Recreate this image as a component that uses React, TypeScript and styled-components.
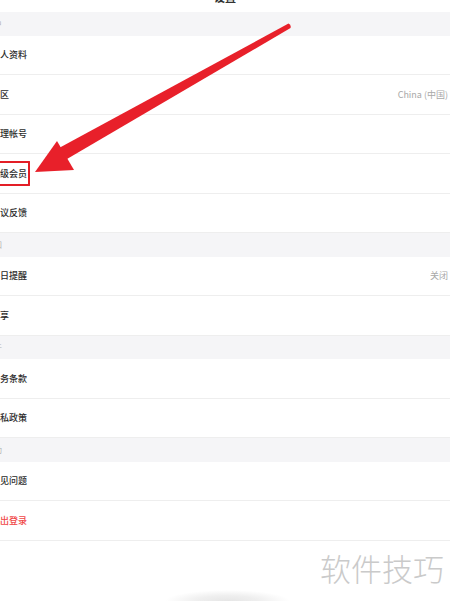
import React from "react";
import styled, { createGlobalStyle } from "styled-components";

const Global = createGlobalStyle`
  html, body { margin: 0; padding: 0; background: #ffffff; }
  body { font-family: "Noto Sans CJK SC", "Noto Sans", sans-serif; overflow: hidden; }
`;

const Page = styled.div`
  position: relative;
  width: 450px;
  height: 601px;
  overflow: hidden;
  background: #ffffff;
`;

const NavBar = styled.div`
  height: 12px;
  display: flex;
  align-items: flex-start;
  justify-content: center;
  overflow: hidden;
`;

const Title = styled.span`
  margin-top: -8px;
  font-size: 11px;
  line-height: 11px;
  font-weight: 700;
  color: #333;
`;

const SectionHeader = styled.div`
  height: 23.5px;
  background: #f5f5f7;
  display: flex;
  align-items: center;
  font-size: 8px;
  color: #b0b0b0;
  overflow: hidden;
`;

const HeaderText = styled.span`
  margin-left: -14px;
`;

const Row = styled.div`
  height: 38.5px;
  border-bottom: 1px solid #eeeeee;
  display: flex;
  align-items: center;
  justify-content: space-between;
  padding-right: 2px;
`;

const Label = styled.span<{ $danger?: boolean }>`
  position: relative;
  margin-left: -9px;
  font-size: 9px;
  font-weight: 500;
  color: ${(p) => (p.$danger ? "#f04848" : "#2c2c2c")};
`;

const Value = styled.span`
  font-size: 9px;
  color: #a8a8a8;
`;

const Highlight = styled.span`
  position: absolute;
  left: 7px;
  right: -3px;
  top: -6px;
  bottom: -6px;
  border: 2px solid #e31e26;
  border-left: none;
  border-radius: 1px;
`;

const ArrowLayer = styled.svg`
  position: absolute;
  left: 0;
  top: 0;
  pointer-events: none;
`;

const Watermark = styled.div`
  position: absolute;
  left: 315px;
  top: 542px;
  width: 135px;
  height: 50px;
  background: #ffffff;
  display: flex;
  align-items: center;
  padding-left: 5px;
  box-sizing: border-box;
  font-size: 31px;
  font-weight: 300;
  color: #cacaca;
`;

const HomeGlow = styled.div`
  position: absolute;
  left: 165px;
  top: 590px;
  width: 125px;
  height: 22px;
  border-radius: 50%;
  background: radial-gradient(ellipse at center, #e6e6e6 0%, #efefef 35%, rgba(255,255,255,0) 70%);
`;

type Item = { label: string; value?: string; danger?: boolean; mark?: boolean };

const sections: { title: string; items: Item[] }[] = [
  {
    title: "账户",
    items: [
      { label: "个人资料" },
      { label: "地区", value: "China (中国)" },
      { label: "管理帐号" },
      { label: "升级会员", mark: true },
      { label: "建议反馈" },
    ],
  },
  { title: "通知", items: [{ label: "每日提醒", value: "关闭" }, { label: "分享" }] },
  { title: "关于", items: [{ label: "服务条款" }, { label: "隐私政策" }] },
  { title: "帮助", items: [{ label: "常见问题" }, { label: "退出登录", danger: true }] },
];

export default function App() {
  return (
    <Page>
      <Global />
      <NavBar>
        <Title>设置</Title>
      </NavBar>
      {sections.map((s) => (
        <React.Fragment key={s.title}>
          <SectionHeader>
            <HeaderText>{s.title}</HeaderText>
          </SectionHeader>
          {s.items.map((it) => (
            <Row key={it.label}>
              <Label $danger={it.danger}>
                {it.label}
                {it.mark && <Highlight />}
              </Label>
              {it.value && <Value>{it.value}</Value>}
            </Row>
          ))}
        </React.Fragment>
      ))}
      <Watermark>软件技巧</Watermark>
      <HomeGlow />
      <ArrowLayer width="450" height="601" viewBox="0 0 450 601">
        <path
          d="M288.5 23.5 Q291.5 25 290.5 28 L67 159 L59 148 Z"
          fill="#e8202a"
        />
        <path d="M57 141 L35 172 L74 170 Z" fill="#e8202a" />
      </ArrowLayer>
    </Page>
  );
}
